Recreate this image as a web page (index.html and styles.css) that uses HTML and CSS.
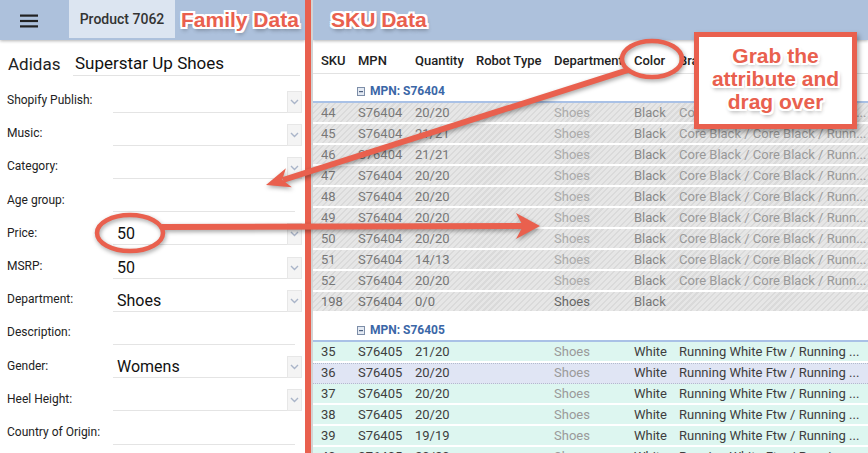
FILE: index.html
```html
<!DOCTYPE html>
<html lang="en">
<head>
<meta charset="utf-8">
<title>Product 7062</title>
<link rel="stylesheet" href="styles.css">
</head>
<body>
<div class="app">
  <section class="family">
    <header class="bar">
      <div class="menu">
        <svg width="18" height="14" viewBox="0 0 18 14"><rect x="0" y="0.5" width="18" height="2.2" fill="#222"/><rect x="0" y="5.9" width="18" height="2.2" fill="#222"/><rect x="0" y="11.3" width="18" height="2.2" fill="#222"/></svg>
      </div>
      <div class="tab">Product 7062</div>
      <span class="note">Family Data</span>
    </header>
    <div class="name-row">
      <span class="brand">Adidas</span>
      <div class="name-input">Superstar Up Shoes</div>
    </div>
    <div class="form">
      <div class="row"><label>Shopify Publish:</label><div class="field"><span class="val"></span><span class="dd"><svg width="9" height="6" viewBox="0 0 9 6"><path d="M1 1l3.5 3.5L8 1" fill="none" stroke="#aab5c9" stroke-width="1.4"/></svg></span></div></div>
      <div class="row"><label>Music:</label><div class="field"><span class="val"></span><span class="dd"><svg width="9" height="6" viewBox="0 0 9 6"><path d="M1 1l3.5 3.5L8 1" fill="none" stroke="#aab5c9" stroke-width="1.4"/></svg></span></div></div>
      <div class="row"><label>Category:</label><div class="field"><span class="val"></span><span class="dd"><svg width="9" height="6" viewBox="0 0 9 6"><path d="M1 1l3.5 3.5L8 1" fill="none" stroke="#aab5c9" stroke-width="1.4"/></svg></span></div></div>
      <div class="row"><label>Age group:</label><div class="field plain"><span class="val"></span></div></div>
      <div class="row"><label>Price:</label><div class="field"><span class="val">50</span><span class="dd"><svg width="9" height="6" viewBox="0 0 9 6"><path d="M1 1l3.5 3.5L8 1" fill="none" stroke="#aab5c9" stroke-width="1.4"/></svg></span></div></div>
      <div class="row"><label>MSRP:</label><div class="field"><span class="val">50</span><span class="dd"><svg width="9" height="6" viewBox="0 0 9 6"><path d="M1 1l3.5 3.5L8 1" fill="none" stroke="#aab5c9" stroke-width="1.4"/></svg></span></div></div>
      <div class="row"><label>Department:</label><div class="field"><span class="val">Shoes</span><span class="dd"><svg width="9" height="6" viewBox="0 0 9 6"><path d="M1 1l3.5 3.5L8 1" fill="none" stroke="#aab5c9" stroke-width="1.4"/></svg></span></div></div>
      <div class="row"><label>Description:</label><div class="field plain"><span class="val"></span></div></div>
      <div class="row"><label>Gender:</label><div class="field"><span class="val">Womens</span><span class="dd"><svg width="9" height="6" viewBox="0 0 9 6"><path d="M1 1l3.5 3.5L8 1" fill="none" stroke="#aab5c9" stroke-width="1.4"/></svg></span></div></div>
      <div class="row"><label>Heel Height:</label><div class="field"><span class="val"></span><span class="dd"><svg width="9" height="6" viewBox="0 0 9 6"><path d="M1 1l3.5 3.5L8 1" fill="none" stroke="#aab5c9" stroke-width="1.4"/></svg></span></div></div>
      <div class="row"><label>Country of Origin:</label><div class="field plain"><span class="val"></span></div></div>
    </div>
  </section>

  <div class="divider"></div>

  <section class="sku">
    <header class="bar"><span class="note">SKU Data</span></header>
    <div class="grid">
      <div class="cols head">
        <span>SKU</span><span>MPN</span><span>Quantity</span><span>Robot Type</span><span>Department</span><span>Color</span><span>Brand Color</span>
      </div>

      <div class="group"><svg width="8" height="9" viewBox="0 0 8 9"><rect x="0.5" y="0.5" width="7" height="8" fill="#e4eaf3" stroke="#7d8ea8"/><rect x="2" y="4" width="4" height="1.2" fill="#4d6080"/></svg><span>MPN: S76404</span></div>
      <div class="cols r striped"><span>44</span><span>S76404</span><span>20/20</span><span></span><span class="dept">Shoes</span><span class="clr">Black</span><span class="bc">Core Black / Core Black / Runn...</span></div>
      <div class="cols r striped"><span>45</span><span>S76404</span><span>21/21</span><span></span><span class="dept">Shoes</span><span class="clr">Black</span><span class="bc">Core Black / Core Black / Runn...</span></div>
      <div class="cols r striped"><span>46</span><span>S76404</span><span>21/21</span><span></span><span class="dept">Shoes</span><span class="clr">Black</span><span class="bc">Core Black / Core Black / Runn...</span></div>
      <div class="cols r striped"><span>47</span><span>S76404</span><span>20/20</span><span></span><span class="dept">Shoes</span><span class="clr">Black</span><span class="bc">Core Black / Core Black / Runn...</span></div>
      <div class="cols r striped"><span>48</span><span>S76404</span><span>20/20</span><span></span><span class="dept">Shoes</span><span class="clr">Black</span><span class="bc">Core Black / Core Black / Runn...</span></div>
      <div class="cols r striped"><span>49</span><span>S76404</span><span>20/20</span><span></span><span class="dept">Shoes</span><span class="clr">Black</span><span class="bc">Core Black / Core Black / Runn...</span></div>
      <div class="cols r striped"><span>50</span><span>S76404</span><span>20/20</span><span></span><span class="dept">Shoes</span><span class="clr">Black</span><span class="bc">Core Black / Core Black / Runn...</span></div>
      <div class="cols r striped"><span>51</span><span>S76404</span><span>14/13</span><span></span><span class="dept">Shoes</span><span class="clr">Black</span><span class="bc">Core Black / Core Black / Runn...</span></div>
      <div class="cols r striped"><span>52</span><span>S76404</span><span>20/20</span><span></span><span class="dept">Shoes</span><span class="clr">Black</span><span class="bc">Core Black / Core Black / Runn...</span></div>
      <div class="cols r striped last"><span>198</span><span>S76404</span><span>0/0</span><span></span><span class="dept">Shoes</span><span class="clr">Black</span><span class="bc"></span></div>

      <div class="group"><svg width="8" height="9" viewBox="0 0 8 9"><rect x="0.5" y="0.5" width="7" height="8" fill="#e4eaf3" stroke="#7d8ea8"/><rect x="2" y="4" width="4" height="1.2" fill="#4d6080"/></svg><span>MPN: S76405</span></div>
      <div class="cols r teal"><span>35</span><span>S76405</span><span>21/20</span><span></span><span class="dept">Shoes</span><span class="clr">White</span><span class="bc">Running White Ftw / Running ...</span></div>
      <div class="cols r teal sel"><span>36</span><span>S76405</span><span>20/20</span><span></span><span class="dept">Shoes</span><span class="clr">White</span><span class="bc">Running White Ftw / Running ...</span></div>
      <div class="cols r teal"><span>37</span><span>S76405</span><span>20/20</span><span></span><span class="dept">Shoes</span><span class="clr">White</span><span class="bc">Running White Ftw / Running ...</span></div>
      <div class="cols r teal"><span>38</span><span>S76405</span><span>20/20</span><span></span><span class="dept">Shoes</span><span class="clr">White</span><span class="bc">Running White Ftw / Running ...</span></div>
      <div class="cols r teal"><span>39</span><span>S76405</span><span>19/19</span><span></span><span class="dept">Shoes</span><span class="clr">White</span><span class="bc">Running White Ftw / Running ...</span></div>
      <div class="cols r teal"><span>40</span><span>S76405</span><span>20/20</span><span></span><span class="dept">Shoes</span><span class="clr">White</span><span class="bc">Running White Ftw / Running ...</span></div>
    </div>
  </section>

  <svg class="overlay" width="868" height="453" viewBox="0 0 868 453">
    <g fill="none" stroke="#e9604e" stroke-width="4.5">
      <ellipse cx="652" cy="59" rx="30" ry="18"/>
      <ellipse cx="130" cy="233" rx="33" ry="18"/>
    </g>
    <g stroke="#e9604e" stroke-width="6">
      <line x1="628" y1="70" x2="283" y2="180"/>
      <line x1="162" y1="227" x2="525" y2="226"/>
    </g>
    <g fill="#e9604e">
      <polygon points="266,185 285.9,168.2 282.2,179.8 291.9,187.2"/>
      <polygon points="540,226 516,213 523,226 516,239"/>
    </g>
  </svg>

  <div class="callout note">Grab the<br>attribute and<br>drag over</div>
</div>
</body>
</html>
```

FILE: styles.css
```css
* { box-sizing: border-box; }

body {
  margin: 0;
  font-family: Roboto, "Noto Sans", Arial, sans-serif;
  background: #fff;
  color: #222;
}

.app {
  position: relative;
  width: 868px;
  height: 453px;
  overflow: hidden;
  display: grid;
  grid-template-columns: 305px 6px 557px;
}

/* ---------- top bars ---------- */
.bar {
  height: 40px;
  background: #adc1dc;
  display: flex;
  align-items: center;
  box-shadow: 0 1px 3px rgba(0, 0, 0, 0.3);
  position: relative;
  z-index: 1;
}

.menu {
  width: 69px;
  height: 40px;
  display: flex;
  align-items: center;
  padding-left: 20px;
  padding-top: 1px;
}

.tab {
  width: 106px;
  height: 38px;
  align-self: flex-start;
  background: #dce5f1;
  display: flex;
  align-items: center;
  justify-content: center;
  font-size: 14px;
  font-weight: 500;
  color: #333;
}

.note {
  font-family: "Liberation Sans", Arial, sans-serif;
  font-weight: 700;
  font-size: 21px;
  color: #e9604e;
  text-shadow:
    -2px -2px 0 #fff, 2px -2px 0 #fff, -2px 2px 0 #fff, 2px 2px 0 #fff,
    0 -2px 0 #fff, 0 2px 0 #fff, -2px 0 0 #fff, 2px 0 0 #fff,
    1px 3px 4px rgba(0, 0, 0, 0.45);
}

.family .bar .note { margin-left: 6px; }
.sku .bar .note { margin-left: 18px; }

/* ---------- family form ---------- */
.family { background: #fff; }

.name-row {
  height: 44px;
  display: flex;
  align-items: flex-start;
  padding: 11px 5px 0 8px;
}

.brand {
  width: 65px;
  font-size: 17px;
  line-height: 24px;
  padding-top: 1px;
  color: #222;
}

.name-input {
  flex: 1;
  height: 25px;
  border-bottom: 1px solid #e3e3e3;
  font-size: 17px;
  line-height: 24px;
  padding-left: 2px;
  color: #111;
}

.form {
  display: flex;
  flex-direction: column;
}

.row {
  height: 33.2px;
  display: flex;
  align-items: flex-start;
  padding-left: 7px;
}

.row label {
  width: 106px;
  font-size: 12px;
  line-height: 32px;
  color: #222;
}

.field {
  width: 189px;
  height: 22px;
  margin-top: 6.7px;
  display: flex;
}

.val {
  flex: 1;
  border-bottom: 1px solid #e4e4e4;
  font-size: 16px;
  line-height: 22px;
  padding-left: 4px;
  color: #111;
}

.field.plain .val {
  flex: none;
  width: 182px;
}

.dd {
  width: 15px;
  height: 22px;
  background: #f4f4f4;
  border: 1px solid #e7e7e7;
  display: flex;
  align-items: center;
  justify-content: center;
}

/* ---------- divider ---------- */
.divider {
  background: #e9604e;
  position: relative;
  z-index: 2;
}

/* ---------- SKU grid ---------- */
.sku {
  border-left: 2px solid #d3d3d3;
  background: #fff;
  overflow: hidden;
}

.cols {
  display: grid;
  grid-template-columns: 37px 57px 61px 78px 80px 45px 1fr;
}

.cols > span {
  padding-left: 8px;
  white-space: nowrap;
  overflow: hidden;
}

.head {
  height: 34px;
  border-bottom: 1px solid #e2e2e2;
  align-items: end;
  padding-bottom: 4px;
  font-size: 13px;
  font-weight: 500;
  line-height: 16px;
  color: #222;
}

.group {
  height: 29px;
  border-bottom: 2px solid #a9c1e6;
  display: flex;
  align-items: flex-start;
  gap: 5px;
  padding: 10px 0 0 44px;
  font-size: 12px;
  font-weight: 700;
  line-height: 14px;
  color: #3b67a7;
}

.group svg { margin-top: 3px; }

.r {
  height: 21px;
  border-bottom: 2px solid #fff;
  font-size: 13px;
  line-height: 19px;
  align-items: start;
}

.striped {
  background: repeating-linear-gradient(135deg, #e6e6e6 0 2.6px, #dadada 2.6px 4.2px);
  color: #787878;
}
.striped .dept { color: #ababab; }
.striped .clr { color: #888; }
.striped .bc { color: #999; }
.striped.last { color: #707070; }
.striped.last .dept { color: #666; }
.striped.last .clr { color: #777; }

.teal {
  background: #ddf6f0;
  color: #3e3e3e;
}
.teal .dept { color: #9a9a9a; }

.teal.sel {
  background: #e0e5f4;
  border-top: 1px dotted #b4bacd;
  border-bottom: 1px dotted #b4bacd;
  line-height: 18px;
}

/* ---------- annotations ---------- */
.overlay {
  position: absolute;
  left: 0;
  top: 0;
  pointer-events: none;
  z-index: 5;
  filter: drop-shadow(1px 2px 2px rgba(0, 0, 0, 0.35));
}

.callout {
  position: absolute;
  left: 694px;
  top: 32px;
  width: 163px;
  height: 97px;
  z-index: 6;
  border: 5px solid #e9604e;
  background: #fff;
  box-shadow: 2px 3px 5px rgba(0, 0, 0, 0.35);
  display: flex;
  flex-direction: column;
  justify-content: center;
  text-align: center;
  line-height: 23px;
  padding-bottom: 5px;
}
```
